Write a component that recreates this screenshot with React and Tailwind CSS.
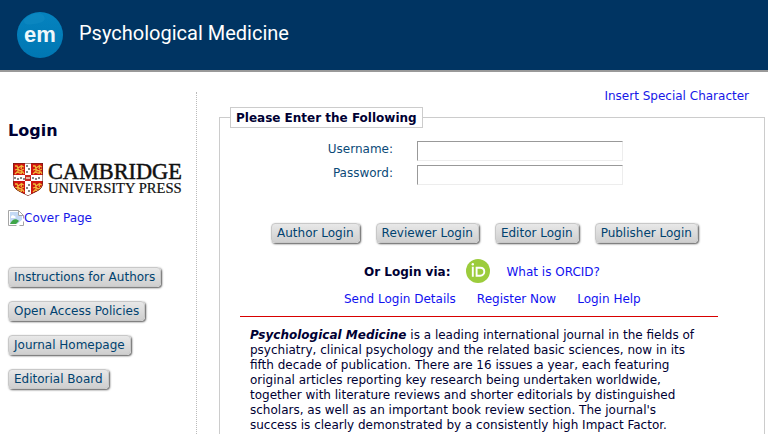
const sideLinks = ['Instructions for Authors', 'Open Access Policies', 'Journal Homepage', 'Editorial Board'];
const roles = ['Author Login', 'Reviewer Login', 'Editor Login', 'Publisher Login'];

const buttonClass =
  'flex h-5 items-center whitespace-nowrap rounded border border-[#c8c8c8] bg-linear-to-b from-[#e8e8e8] to-[#cfcfcf] px-[5px] text-xs text-[#00426f] shadow-[1px_1px_2px_#555]';

function EmLogo() {
  return (
    <svg className="size-[46px] shrink-0" viewBox="0 0 46 46" role="img" aria-label="em">
      <defs>
        <linearGradient id="em" x1="0" y1="0" x2="0" y2="1">
          <stop offset="0" stopColor="#0583bf" />
          <stop offset="1" stopColor="#0077b3" />
        </linearGradient>
      </defs>
      <circle cx="23" cy="23" r="23" fill="url(#em)" />
      <path d="M7 8C13 1 24-1 27 4s-3 7-10 8S7 13 7 8Z" fill="#128bc3" opacity=".5" />
      <text x="23" y="30" textAnchor="middle" fill="#eef7fb" fontFamily="Liberation Sans, sans-serif" fontWeight="700" fontSize="22">em</text>
    </svg>
  );
}

function Lion({ x, y }) {
  return (
    <g transform={`translate(${x} ${y})`} fill="none" stroke="#f0b93a" strokeWidth="1.3">
      <path d="M1 2h2l1 2 3-2 3 1M1 6l3-1 2 2 4-2M1 10l2-2 3 1 3-1 1 2M8 1l-1 4M4 5v4M8 7l-1 3" />
    </g>
  );
}

function CambridgeLogo() {
  return (
    <svg className="h-9 w-[178px] overflow-visible" viewBox="0 0 178 36" role="img" aria-label="Cambridge University Press">
      <clipPath id="shield"><path d="M0 0h30v20c0 7-8 9-15 13C8 29 0 27 0 20Z" /></clipPath>
      <g transform="translate(5 2)" clipPath="url(#shield)">
        <path d="M0 0h30v34H0z" fill="#d0150f" />
        <Lion x={1} y={1} /><Lion x={19} y={1} /><Lion x={1} y={19} /><Lion x={19} y={19} />
        <path d="M12 0h6v34h-6zM0 12h30v6H0z" fill="#fff" />
        <path d="M14 2v2M16 5v2M14 8v2M16 21v2M14 24v2M16 27v2M2 14v2M5 15v2M8 14v2M11 15v2M20 14v2M23 15v2M26 14v2" stroke="#333" strokeWidth="1.2" fill="none" />
        <path d="M12 12h6v6h-6z" fill="#c52b22" />
        <path d="M13 14h4v2h-4z" fill="#e8b09a" />
        <path d="M0 0h30v20c0 7-8 9-15 13C8 29 0 27 0 20Z" fill="none" stroke="#552018" />
      </g>
      <g fontFamily="Liberation Serif, serif" fill="#111" stroke="#111">
        <text x="40" y="18" fontSize="22.3" strokeWidth=".5">CAMBRIDGE</text>
        <text x="40" y="32" fontSize="14.6" strokeWidth=".2">UNIVERSITY PRESS</text>
      </g>
    </svg>
  );
}

function BrokenImage() {
  return (
    <svg className="size-4 shrink-0" viewBox="0 0 16 16" aria-hidden="true">
      <path d="M.5.5h10l5 5v10H.5z" fill="#fff" stroke="#a5a5a5" />
      <path d="M2 2h8v4h4v4L9 14H2z" fill="#c3d9f5" />
      <path d="M3 7c0-2 3-2 3-1 2 0 2 2 1 2H3z" fill="#fff" />
      <path d="M2 14c2-5 6-6 9-3l-3 3z" fill="#3fa648" />
      <path d="M10.500.5v5h5z" fill="#fff" stroke="#a5a5a5" />
      <path d="M16 8L8 16h3l5-5z" fill="#fff" />
    </svg>
  );
}

function OrcidIcon() {
  return (
    <svg className="size-6" viewBox="0 0 24 24" role="img" aria-label="ORCID">
      <circle cx="12" cy="12" r="12" fill="#9ccc3c" />
      <circle cx="6.800" cy="5.300" r="1.200" fill="#fff" />
      <path d="M6.800 7.700v10M10.600 8.700h3.500c5.600 0 5.600 8 0 8h-3.500z" fill="none" stroke="#fff" strokeWidth="1.900" />
    </svg>
  );
}

function Field({ id, label, type }) {
  return (
    <div className="flex h-6 gap-6">
      <label htmlFor={id} className="w-[153px] text-right leading-4 text-[#0b4a78]">{label}</label>
      <input id={id} type={type} className="h-5 w-[206px] border border-[#ededed] border-t-[#999] border-l-[#999] px-1 outline-none" />
    </div>
  );
}

export default function App() {
  return (
    <div className="flex h-screen flex-col overflow-hidden bg-white font-['DejaVu_Sans',sans-serif] text-xs text-[#000033]">
      <header className="flex h-18 shrink-0 items-center gap-4 border-b-2 border-[#999] bg-[#003462] px-[17px]">
        <EmLogo />
        <h1 className="pb-1 font-['Roboto',sans-serif] text-xl text-white">Psychological Medicine</h1>
      </header>
      <div className="flex min-h-0 flex-1 pt-5">
        <aside className="flex w-[197px] shrink-0 flex-col items-start border-r border-dotted border-[#bbb] pl-2">
          <h2 className="mt-[27px] text-base font-bold">Login</h2>
          <div className="mt-[18px]"><CambridgeLogo /></div>
          <a href="#cover" className="mt-[13px] flex items-center text-[#1717e8]"><BrokenImage />Cover Page</a>
          <nav className="mt-[41px] flex flex-col items-start gap-3.5">
            {sideLinks.map((t) => <a key={t} href="#journal" className={buttonClass}>{t}</a>)}
          </nav>
        </aside>
        <main className="min-w-0 flex-1 pl-[22px] pr-[3px]">
          <div className="-mt-1 flex h-4 items-end justify-end pr-4">
            <a href="#characters" className="text-[#1717e8]">Insert Special Character</a>
          </div>
          <form onSubmit={(e) => e.preventDefault()}>
            <fieldset className="mt-[3px] min-w-0 border border-[#ccc] px-2.5 pb-8">
              <legend className="h-[21px] border border-[#ccc] px-[5px] font-bold leading-5">Please Enter the Following</legend>
              <div className="max-w-[498px] px-2.5">
                <div className="mt-[13px]">
                  <Field id="user" label="Username:" type="text" />
                  <Field id="pass" label="Password:" type="password" />
                </div>
                <div className="mt-[34px] flex gap-4 pl-[31px]">
                  {roles.map((r) => <button key={r} type="submit" className={buttonClass}>{r}</button>)}
                </div>
                <div className="mt-4 flex items-center gap-4 pl-[124px]">
                  <strong className="pt-0.5">Or Login via:</strong>
                  <a href="#orcid"><OrcidIcon /></a>
                  <a href="#about" className="pt-0.5 text-[#1111f0]">What is ORCID?</a>
                </div>
                <div className="mt-2 flex gap-[21px] pl-[104px] text-[#1111f0]">
                  <a href="#send">Send Login Details</a>
                  <a href="#register">Register Now</a>
                  <a href="#help">Login Help</a>
                </div>
                <hr className="mt-[9px] h-px border-0 bg-[#d80000]" />
                <p className="mt-[11px] pl-2.5 pr-5 leading-[15px]">
                  <em className="font-bold">Psychological Medicine</em> is a leading international journal in the fields of psychiatry, clinical psychology and the related basic sciences, now in its fifth decade of publication. There are 16 issues a year, each featuring original articles reporting key research being undertaken worldwide, together with literature reviews and shorter editorials by distinguished scholars, as well as an important book review section. The journal's success is clearly demonstrated by a consistently high Impact Factor.
                </p>
              </div>
            </fieldset>
          </form>
        </main>
      </div>
    </div>
  );
}
